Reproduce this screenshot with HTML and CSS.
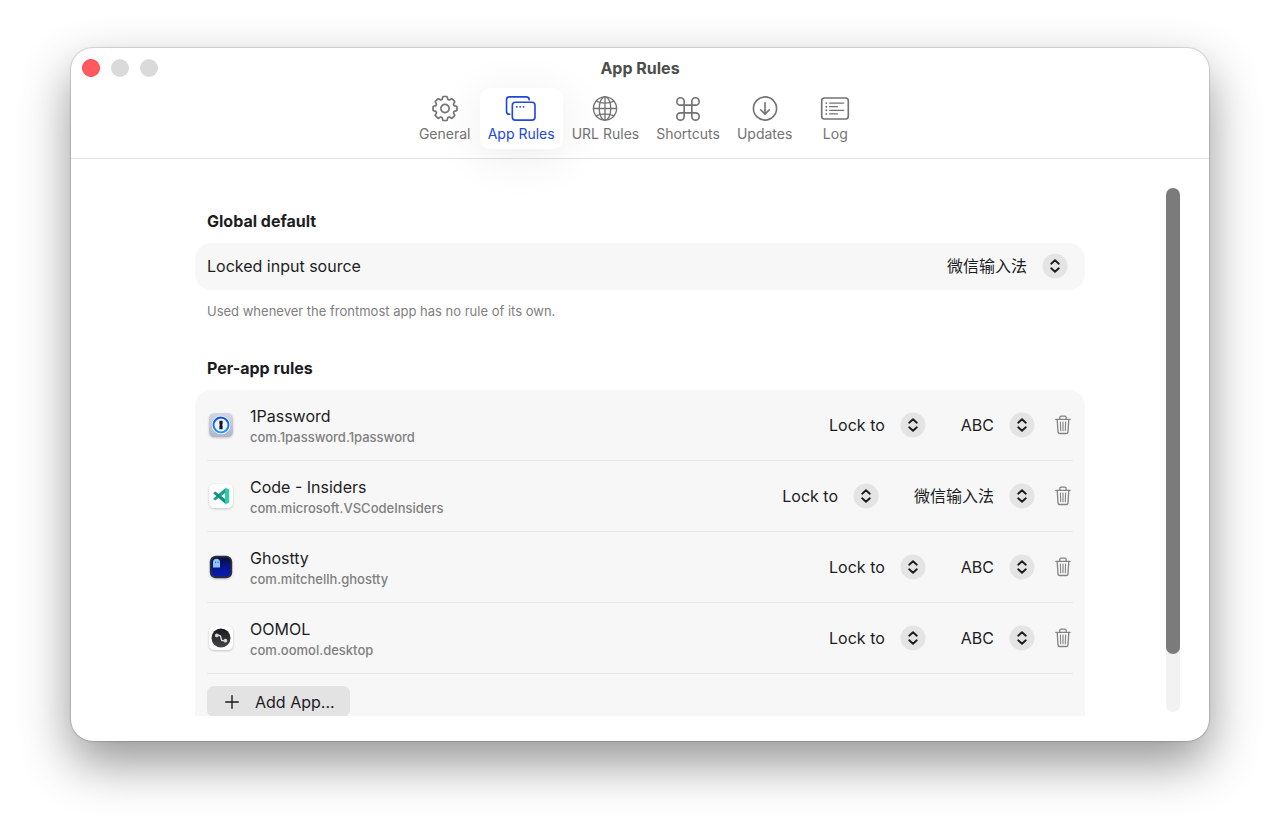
FILE: index.html
```html
<!DOCTYPE html>
<html lang="en">
<head>
<meta charset="utf-8">
<meta name="viewport" content="width=device-width, initial-scale=1">
<title>App Rules</title>
<link rel="stylesheet" href="styles.css">
</head>
<body>
<svg class="symbols" aria-hidden="true">
  <symbol id="updown" viewBox="0 0 26 26">
    <circle cx="13" cy="13" r="12.5" fill="#e4e4e4"/>
    <path d="M9.200 10.700 13 7.300l3.800 3.400M9.200 15.300l3.800 3.400 3.800-3.400" fill="none" stroke="#1d1d1f" stroke-width="1.9" stroke-linecap="round" stroke-linejoin="round"/>
  </symbol>
  <symbol id="trash" viewBox="0 0 18 20">
    <g fill="none" stroke="#838383" stroke-width="1.3" stroke-linecap="round" stroke-linejoin="round">
      <path d="M1.800 4.300h14.400M5.800 4.100V2.500a1.300 1.300 0 0 1 1.300-1.300h3.800a1.300 1.300 0 0 1 1.300 1.300v1.600M3.200 4.500l.8 12.400a1.700 1.700 0 0 0 1.700 1.600h6.600a1.700 1.700 0 0 0 1.700-1.600l.8-12.400"/>
      <path d="m6.400 7 .3 8.800M9 7v8.800M11.600 7l-.3 8.800" stroke-width="1.1"/>
    </g>
  </symbol>
</svg>

<div class="window">
  <header class="header">
    <div class="titlebar">
      <div class="lights">
        <button class="light light-close" aria-label="Close"></button>
        <button class="light" aria-label="Minimize"></button>
        <button class="light" aria-label="Zoom"></button>
      </div>
      <h1 class="title">App Rules</h1>
    </div>
    <nav class="toolbar" aria-label="Settings sections">
      <button class="tab">
        <svg class="tab-icon" viewBox="-16 -14 32 28" aria-hidden="true">
          <path d="M-3-9.400-2.300-12a.5.5 0 0 1 .5-.4H1.800a.5.5 0 0 1 .5.4L3-9.400 4.520-8.770 6.860-10.110a.5.5 0 0 1 .6.1L10.010-7.460a.5.5 0 0 1 .1.600L8.770-4.520 9.400-3 12-2.300a.5.5 0 0 1 .4.5V1.800a.5.5 0 0 1-.4.5L9.400 3 8.770 4.520 10.110 6.860a.5.5 0 0 1-.1.600L7.460 10.010a.5.5 0 0 1-.6.100L4.520 8.770 3 9.400 2.300 12a.5.5 0 0 1-.5.400H-1.800a.5.5 0 0 1-.5-.400L-3 9.400-4.520 8.770-6.860 10.110a.5.5 0 0 1-.6-.100L-10.010 7.460a.5.5 0 0 1-.1-.600L-8.770 4.520-9.400 3-12 2.300a.5.5 0 0 1-.4-.500V-1.800a.5.5 0 0 1 .4-.500L-9.400-3-8.770-4.520-10.110-6.860a.5.5 0 0 1 .1-.600L-7.460-10.010a.5.5 0 0 1 .6-.100L-4.520-8.770Z"/>
          <circle r="4.300"/>
        </svg>
        <span>General</span>
      </button>
      <button class="tab tab-active" aria-current="page">
        <svg class="tab-icon" viewBox="505 95 32 28" aria-hidden="true">
          <path d="M509.500 115H509a3 3 0 0 1-3-3V100a3 3 0 0 1 3-3H526.500a3 3 0 0 1 3 3"/>
          <rect x="512" y="102.500" width="23.500" height="18.500" rx="3.200"/>
          <g class="solid"><circle cx="516.700" cy="107.300" r="1"/><circle cx="520.200" cy="107.300" r="1"/><circle cx="523.700" cy="107.300" r="1"/></g>
        </svg>
        <span>App Rules</span>
      </button>
      <button class="tab">
        <svg class="tab-icon thin" viewBox="-16 -14 32 28" aria-hidden="true">
          <circle r="12"/><ellipse rx="6" ry="12"/>
          <path d="M0-12V12M-12 0H12M-9.300-7.600Q0-3.400 9.300-7.600M-9.300 7.600Q0 3.400 9.300 7.600"/>
        </svg>
        <span>URL Rules</span>
      </button>
      <button class="tab">
        <svg class="tab-icon" viewBox="-3 -1.500 32 28" aria-hidden="true">
          <path d="M9 5.200a3.800 3.800 0 1 0-3.800 3.800H20.800a3.800 3.800 0 1 0-3.800-3.800V20.800a3.800 3.800 0 1 0 3.800-3.800H5.200a3.800 3.800 0 1 0 3.800 3.800Z"/>
        </svg>
        <span>Shortcuts</span>
      </button>
      <button class="tab">
        <svg class="tab-icon" viewBox="-16 -14 32 28" aria-hidden="true">
          <circle r="12"/><path d="M0-6V5.500M-4.500 1.300 0 5.800 4.500 1.300"/>
        </svg>
        <span>Updates</span>
      </button>
      <button class="tab">
        <svg class="tab-icon" viewBox="-16 -14 32 28" aria-hidden="true">
          <rect x="-13.800" y="-10.900" width="27.600" height="21.800" rx="2.800"/>
          <path class="fine" d="M-5.500-5.600H9M-5.500-1.900H2.500M-5.500 1.900H9M-5.500 5.600H2.500"/>
          <g class="solid"><circle cx="-9" cy="-5.600" r="1"/><circle cx="-9" cy="-1.900" r="1"/><circle cx="-9" cy="1.900" r="1"/><circle cx="-9" cy="5.600" r="1"/></g>
        </svg>
        <span>Log</span>
      </button>
    </nav>
  </header>

  <div class="body">
    <main class="scroll">
      <section class="section">
        <h2 class="heading">Global default</h2>
        <div class="card">
          <div class="row row-single">
            <label class="row-label" for="global-source">Locked input source</label>
            <div class="picker">
              <select id="global-source"><option>微信输入法</option></select>
              <svg class="picker-icon" aria-hidden="true"><use href="#updown"/></svg>
            </div>
          </div>
        </div>
        <p class="hint">Used whenever the frontmost app has no rule of its own.</p>
      </section>

      <section class="section">
        <h2 class="heading">Per-app rules</h2>
        <div class="card">
          <div class="row">
            <svg class="app-icon" viewBox="0 0 28 28" aria-hidden="true">
              <defs>
                <linearGradient id="op-bg" x2="0" y2="1"><stop stop-color="#d3d8e4"/><stop offset="1" stop-color="#aeb5c8"/></linearGradient>
                <linearGradient id="op-ring" x2="0" y2="1"><stop stop-color="#0a4cf0"/><stop offset="1" stop-color="#1f9af8"/></linearGradient>
              </defs>
              <rect x="2" y="2" width="24" height="24" rx="5.500" fill="url(#op-bg)"/>
              <circle cx="14" cy="14" r="9.300" fill="#fff"/>
              <circle cx="14" cy="14" r="7.500" fill="#f1f3fa" stroke="url(#op-ring)" stroke-width="2"/>
              <path d="M12.400 9.700h3.200v3.500l-.6.800.6.700v3.600h-3.200v-3.500l.6-.8-.6-.7Z" fill="#14142e"/>
            </svg>
            <div class="app">
              <div class="app-name">1Password</div>
              <div class="app-id">com.1password.1password</div>
            </div>
            <div class="picker"><select aria-label="Rule for 1Password"><option>Lock to</option></select><svg class="picker-icon" aria-hidden="true"><use href="#updown"/></svg></div>
            <div class="picker"><select aria-label="Input source for 1Password"><option>ABC</option></select><svg class="picker-icon" aria-hidden="true"><use href="#updown"/></svg></div>
            <button class="delete" aria-label="Delete 1Password rule"><svg aria-hidden="true"><use href="#trash"/></svg></button>
          </div>
          <div class="row">
            <svg class="app-icon" viewBox="0 0 28 28" aria-hidden="true">
              <rect x="2" y="2" width="24" height="24" rx="5.500" fill="#fff"/>
              <path d="m6.200 16.800 12.600-11v4.800L8.200 18.600Z" fill="#18a184"/>
              <path d="M6.200 11.200 8.200 9.400l10.600 8v4.800Z" fill="#0f9478"/>
              <path d="m18 5.600 4.200 1.900V20.500L18 22.400Z" fill="#33c9ab"/>
            </svg>
            <div class="app">
              <div class="app-name">Code - Insiders</div>
              <div class="app-id">com.microsoft.VSCodeInsiders</div>
            </div>
            <div class="picker"><select aria-label="Rule for Code - Insiders"><option>Lock to</option></select><svg class="picker-icon" aria-hidden="true"><use href="#updown"/></svg></div>
            <div class="picker"><select aria-label="Input source for Code - Insiders"><option>微信输入法</option></select><svg class="picker-icon" aria-hidden="true"><use href="#updown"/></svg></div>
            <button class="delete" aria-label="Delete Code - Insiders rule"><svg aria-hidden="true"><use href="#trash"/></svg></button>
          </div>
          <div class="row">
            <svg class="app-icon" viewBox="0 0 28 28" aria-hidden="true">
              <defs><linearGradient id="gh-bg" x2="0" y2="1"><stop stop-color="#06103c"/><stop offset=".5" stop-color="#061490"/><stop offset="1" stop-color="#0a1cb0"/></linearGradient></defs>
              <rect x="2.800" y="2.800" width="22.400" height="22.400" rx="6" fill="#2b2f3a"/>
              <rect x="4.600" y="4.600" width="18.800" height="18.800" rx="4.200" fill="url(#gh-bg)"/>
              <path d="M6 14.600V9.300a3.500 3.500 0 0 1 7 0v5.300l-1.700-.2-1.700.2-1.800-.2Z" fill="#8fc4ff"/>
              <path d="M8 9.300h1M10.500 9.300h1" stroke="#24509c" stroke-width="1"/>
            </svg>
            <div class="app">
              <div class="app-name">Ghostty</div>
              <div class="app-id">com.mitchellh.ghostty</div>
            </div>
            <div class="picker"><select aria-label="Rule for Ghostty"><option>Lock to</option></select><svg class="picker-icon" aria-hidden="true"><use href="#updown"/></svg></div>
            <div class="picker"><select aria-label="Input source for Ghostty"><option>ABC</option></select><svg class="picker-icon" aria-hidden="true"><use href="#updown"/></svg></div>
            <button class="delete" aria-label="Delete Ghostty rule"><svg aria-hidden="true"><use href="#trash"/></svg></button>
          </div>
          <div class="row">
            <svg class="app-icon" viewBox="0 0 28 28" aria-hidden="true">
              <defs><linearGradient id="oo-bg" x2="0" y2="1"><stop stop-color="#17181c"/><stop offset="1" stop-color="#45474c"/></linearGradient></defs>
              <rect x="2" y="2" width="24" height="24" rx="5.500" fill="#fff"/>
              <circle cx="14" cy="14" r="9.500" fill="url(#oo-bg)"/>
              <path d="M9.700 11.400h2.600c2.600 0 .8 5.300 3.400 5.300h2.600" fill="none" stroke="#e2e2e2" stroke-width="1.300"/>
              <circle cx="9.800" cy="11.400" r="1.900" fill="#d4d4d4"/><circle cx="18.400" cy="16.700" r="1.900" fill="#d4d4d4"/>
            </svg>
            <div class="app">
              <div class="app-name">OOMOL</div>
              <div class="app-id">com.oomol.desktop</div>
            </div>
            <div class="picker"><select aria-label="Rule for OOMOL"><option>Lock to</option></select><svg class="picker-icon" aria-hidden="true"><use href="#updown"/></svg></div>
            <div class="picker"><select aria-label="Input source for OOMOL"><option>ABC</option></select><svg class="picker-icon" aria-hidden="true"><use href="#updown"/></svg></div>
            <button class="delete" aria-label="Delete OOMOL rule"><svg aria-hidden="true"><use href="#trash"/></svg></button>
          </div>
          <div class="footer">
            <button class="add">
              <svg class="add-icon" viewBox="0 0 14 14" aria-hidden="true"><path d="M7 .7v12.600M.7 7h12.600" stroke="#1d1d1f" stroke-width="1.400" stroke-linecap="round"/></svg>
              <span>Add App...</span>
            </button>
          </div>
        </div>
      </section>
    </main>
    <div class="track" aria-hidden="true"><div class="thumb"></div></div>
  </div>
</div>
</body>
</html>
```
FILE: styles.css
```css
* { box-sizing: border-box; }

body {
  margin: 0;
  height: 100vh;
  padding: 48px 71px 94px;
  display: flex;
  background: #fff;
  color: #1d1d1f;
  font: 16px/20px Inter, "Noto Sans CJK SC", sans-serif;
  overflow: hidden;
}

h1, h2, p { margin: 0; }

button, select {
  margin: 0;
  padding: 0;
  border: 0;
  background: none;
  color: inherit;
  font: inherit;
}

.symbols { position: absolute; width: 0; height: 0; }

.window {
  flex: 1;
  min-width: 0;
  display: flex;
  flex-direction: column;
  border-radius: 22px;
  background: #fff;
  box-shadow: 0 0 1px 1px rgba(0, 0, 0, 0.14), 0 22px 50px rgba(0, 0, 0, 0.42);
}

.header {
  border-bottom: 1px solid #e2e2e2;
  padding-bottom: 9px;
}

.titlebar {
  height: 40px;
  padding: 0 11px;
  display: grid;
  grid-template-columns: 1fr auto 1fr;
  align-items: center;
}

.lights { display: flex; gap: 11px; }

.light {
  width: 18px;
  height: 18px;
  border-radius: 50%;
  background: #dadada;
}

.light-close { background: #ff5a5e; border: 1px solid #f5484e; }

.title {
  font-size: 16px;
  line-height: 20px;
  font-weight: 700;
  color: #4d4d4d;
}

.toolbar {
  display: flex;
  justify-content: center;
  gap: 1px;
}

.tab {
  min-width: 68px;
  height: 61px;
  padding: 7px 8px 5px;
  display: flex;
  flex-direction: column;
  align-items: center;
  gap: 2px;
  border-radius: 10px;
  color: #737373;
  font-size: 14px;
  line-height: 20px;
}

.tab-active {
  color: #2347d9;
  background: #fff;
  box-shadow: 0 8px 48px rgba(0, 0, 0, 0.08);
}

.tab-icon {
  width: 32px;
  height: 28px;
  fill: none;
  stroke: currentColor;
  stroke-width: 1.7;
  stroke-linecap: round;
  stroke-linejoin: round;
}

.thin { stroke-width: 1.4; }
.fine { stroke-width: 1.4; }
.solid { fill: currentColor; stroke: none; }

.body {
  flex: 1;
  min-height: 0;
  padding-bottom: 25px;
  display: grid;
  grid-template-columns: 1fr minmax(0, 890px) 1fr;
  grid-template-rows: minmax(0, 1fr);
}

.scroll {
  grid-column: 2;
  padding-top: 52px;
  overflow-y: auto;
  scrollbar-width: none;
}

.track {
  justify-self: end;
  width: 14px;
  margin: 29px 29px 4px 0;
  border-radius: 7px;
  background: #f2f2f2;
}

.thumb {
  height: 89%;
  border-radius: 7px;
  background: #7b7b7b;
}

.section + .section { margin-top: 37px; }

.heading {
  padding: 0 12px;
  font-size: 16px;
  line-height: 20px;
  font-weight: 700;
}

.card {
  margin-top: 12px;
  padding: 0 12px;
  border-radius: 16px;
  background: #f7f7f7;
}

.row {
  height: 71px;
  padding-right: 1px;
  display: flex;
  align-items: center;
  border-bottom: 1px solid #e8e8e8;
}

.row-single {
  height: 47px;
  padding: 0 5px 1px 0;
  border-bottom: 0;
}

.row-label { flex: 1; }

.hint {
  margin-top: 11px;
  padding: 0 12px;
  font-size: 13px;
  line-height: 20px;
  color: #808080;
}

.app-icon {
  flex: none;
  width: 28px;
  height: 28px;
  filter: drop-shadow(0 1px 1px rgba(0, 0, 0, 0.2));
}

.app { flex: 1; min-width: 0; padding: 2px 0 0 15px; }
.app-name { line-height: 21px; }

.app-id {
  font-size: 13px;
  line-height: 20px;
  font-weight: 500;
  color: #808080;
}

.picker { display: grid; align-items: center; }
.picker + .picker { margin-left: 35px; }

.picker select {
  grid-area: 1 / 1;
  height: 26px;
  padding-right: 41px;
  appearance: none;
  field-sizing: content;
}

.picker-icon {
  grid-area: 1 / 1;
  justify-self: end;
  width: 26px;
  height: 26px;
  pointer-events: none;
}

.delete { margin-left: 19px; height: 20px; }
.delete svg { display: block; width: 18px; height: 20px; }

.footer { padding: 12px 0; }

.add {
  height: 31px;
  padding: 0 15px 0 18px;
  display: flex;
  align-items: center;
  gap: 16px;
  border-radius: 7px;
  background: #e3e3e3;
}

.add-icon { width: 14px; height: 14px; }
```
